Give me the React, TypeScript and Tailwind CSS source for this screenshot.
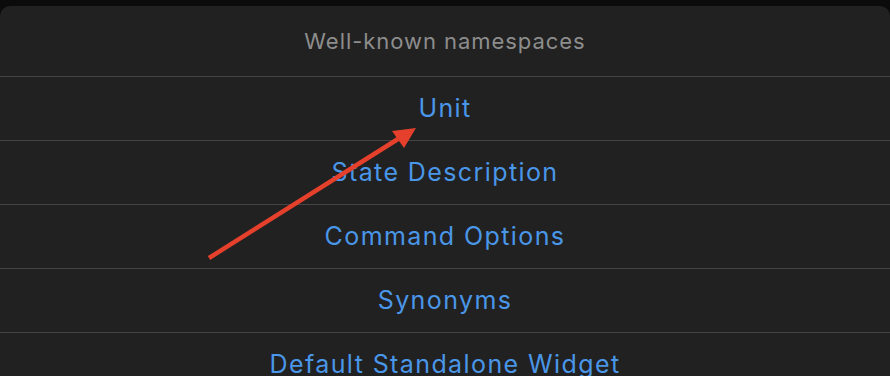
import React from "react";

const items = [
  "Unit",
  "State Description",
  "Command Options",
  "Synonyms",
  "Default Standalone Widget",
];

export default function App() {
  return (
    <div
      className="relative w-[890px] h-[376px] overflow-hidden bg-[#0b0b0b] pt-[6px]"
      style={{ fontFamily: "Inter, 'Noto Sans', sans-serif" }}
    >
      <div className="h-full bg-[#212121] rounded-t-[10px] flex flex-col">
        <div className="h-[71px] shrink-0 flex items-center justify-center border-b border-[#444444] text-[22px] tracking-[0.95px] text-[#8d8d8d]">
          Well-known namespaces
        </div>
        {items.map((t) => (
          <div
            key={t}
            className="h-[64px] shrink-0 flex items-center justify-center border-b border-[#444444] text-[25px] tracking-[1.4px] text-[#4a96e8] whitespace-nowrap"
          >
            {t}
          </div>
        ))}
      </div>
      <svg
        className="absolute left-0 top-0 pointer-events-none"
        width="890"
        height="376"
        viewBox="0 0 890 376"
      >
        <line
          x1="209"
          y1="258"
          x2="398"
          y2="139"
          stroke="#e5402b"
          strokeWidth="4.5"
          strokeLinecap="butt"
        />
        <polygon points="416,128 392,131 404,148" fill="#e5402b" />
      </svg>
    </div>
  );
}
